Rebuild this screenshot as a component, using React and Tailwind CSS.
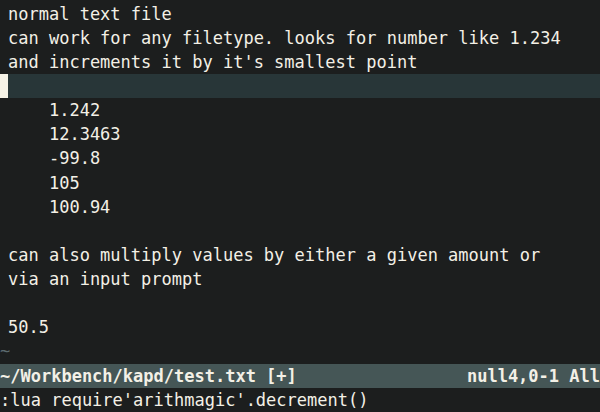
export default function App() {
  const font = { fontFamily: '"DejaVu Sans Mono", "Liberation Mono", monospace' };
  const Row = ({ children, className = "" }) => (
    <div className={`h-[24.2px] leading-[24.2px] whitespace-pre pl-[8px] ${className}`}>{children}</div>
  );
  return (
    <div
      className="w-[600px] h-[412px] overflow-hidden bg-[#1c1e1e] text-[#f3f0e6] text-[17px] pt-[1.5px] flex flex-col"
      style={font}
    >
      <Row>normal text file</Row>
      <Row>can work for any filetype. looks for number like 1.234</Row>
      <Row>and increments it by it's smallest point</Row>
      <div className="h-[24.2px] bg-[#283638] flex">
        <div className="w-[8px] h-full bg-[#f5f2e6]" />
      </div>
      <Row>{"    1.242"}</Row>
      <Row>{"    12.3463"}</Row>
      <Row>{"    -99.8"}</Row>
      <Row>{"    105"}</Row>
      <Row>{"    100.94"}</Row>
      <Row>{""}</Row>
      <Row>can also multiply values by either a given amount or</Row>
      <Row>via an input prompt</Row>
      <Row>{""}</Row>
      <Row>50.5</Row>
      <div className="h-[24.2px] leading-[24.2px] text-[#5b6a6e]">~</div>
      <div className="h-[24.2px] leading-[24.2px] bg-[#455656] font-bold flex justify-between whitespace-pre">
        <span>~/Workbench/kapd/test.txt [+]</span>
        <span>null4,0-1 All</span>
      </div>
      <div className="h-[24.2px] leading-[24.2px] whitespace-pre">:lua require'arithmagic'.decrement()</div>
    </div>
  );
}
